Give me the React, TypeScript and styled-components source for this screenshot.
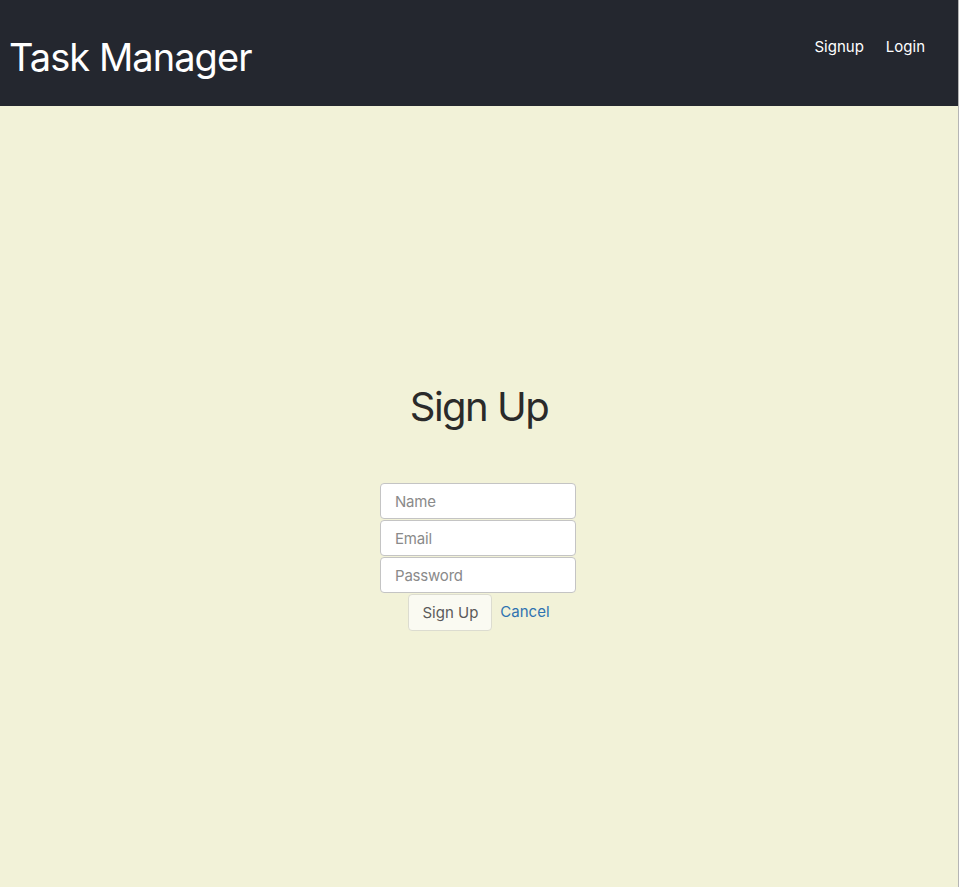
import React from "react";
import styled, { createGlobalStyle } from "styled-components";

const Global = createGlobalStyle`
  html, body { margin: 0; padding: 0; background: #ffffff; }
  body { font-family: Inter, "Noto Sans", sans-serif; }
  * { box-sizing: border-box; }
`;

const Page = styled.div`
  width: 959px;
  height: 887px;
  display: flex;
  flex-direction: column;
  border-right: 1px solid #b5b5b5;
  background: #f2f2d8;
`;

const Header = styled.header`
  height: 106px;
  flex: none;
  background: #24272f;
  display: flex;
  align-items: flex-start;
  justify-content: space-between;
  padding: 0 33px 0 9px;
`;

const Brand = styled.h1`
  margin: 0;
  padding-top: 34px;
  font-size: 38px;
  font-weight: 400;
  line-height: 46px;
  color: #ffffff;
  letter-spacing: -0.95px;
`;

const Nav = styled.nav`
  display: flex;
  gap: 22px;
  padding-top: 37px;
`;

const NavLink = styled.a`
  color: #ffffff;
  font-size: 15px;
  line-height: 20px;
  text-decoration: none;
`;

const Main = styled.main`
  flex: 1;
  display: flex;
  flex-direction: column;
  align-items: center;
  padding-top: 277px;
`;

const Title = styled.h2`
  margin: 0 0 52px;
  font-size: 40px;
  font-weight: 400;
  line-height: 48px;
  color: #2a2a2a;
  letter-spacing: -1.5px;
`;

const Form = styled.form`
  display: flex;
  flex-direction: column;
  align-items: center;
  gap: 1px;
  margin-right: 2px;
`;

const Input = styled.input`
  width: 196px;
  height: 36px;
  padding: 0 14px;
  border: 1px solid #c4c4c4;
  border-radius: 4px;
  background: #ffffff;
  font-family: inherit;
  font-size: 15px;
  letter-spacing: -0.2px;
  color: #333;
  &::placeholder { color: #8a8a8a; }
`;

const Actions = styled.div`
  display: flex;
  align-items: center;
  gap: 8px;
  margin-left: 2px;
`;

const Button = styled.button`
  height: 37px;
  padding: 0 13px;
  border: 1px solid #dcdcd0;
  border-radius: 4px;
  background: #fafaf2;
  font-family: inherit;
  font-size: 15px;
  color: #5a5a5a;
`;

const Cancel = styled.a`
  color: #2f73b1;
  font-size: 15px;
  text-decoration: none;
  margin-top: -3px;
`;

export default function App() {
  return (
    <>
      <Global />
      <Page>
        <Header>
          <Brand>Task Manager</Brand>
          <Nav>
            <NavLink href="#">Signup</NavLink>
            <NavLink href="#">Login</NavLink>
          </Nav>
        </Header>
        <Main>
          <Title>Sign Up</Title>
          <Form onSubmit={(e) => e.preventDefault()}>
            <Input placeholder="Name" />
            <Input placeholder="Email" />
            <Input placeholder="Password" type="password" />
            <Actions>
              <Button type="submit">Sign Up</Button>
              <Cancel href="#">Cancel</Cancel>
            </Actions>
          </Form>
        </Main>
      </Page>
    </>
  );
}
